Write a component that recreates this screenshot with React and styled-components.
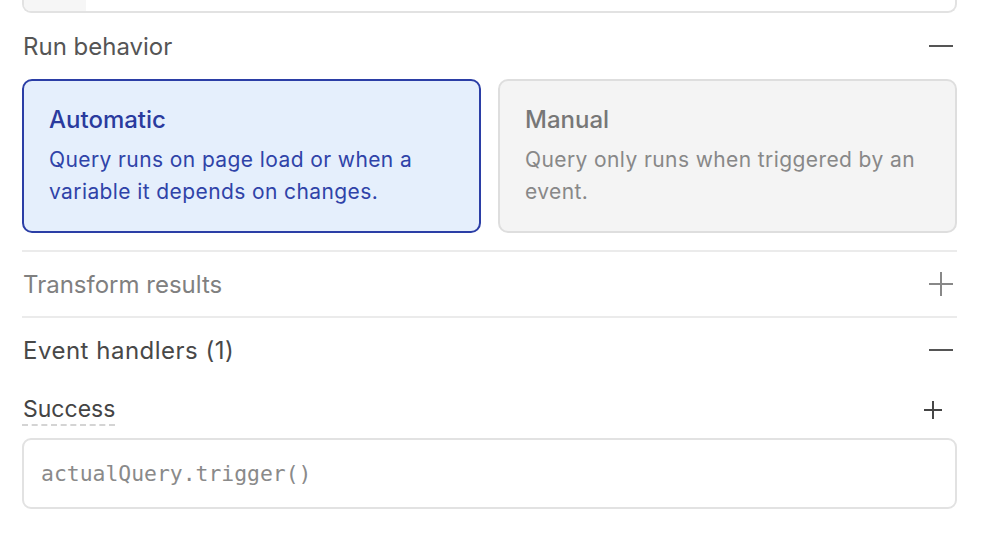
import React from 'react'
import styled, {createGlobalStyle} from 'styled-components'

const GlobalStyle = createGlobalStyle`
  body {
    margin: 0;
    background: #fff;
    font-family: Inter, "Noto Sans", sans-serif;
  }
`

const MinusIcon = ({color}) => (
  <svg width="24" height="24" viewBox="0 0 24 24">
    <path d="M0 12h24" stroke={color} strokeWidth="2" />
  </svg>
)

const PlusIcon = ({color, size = 24}) => (
  <svg width={size} height={size} viewBox="0 0 24 24">
    <path d="M0 12h24M12 0v24" stroke={color} strokeWidth={size < 20 ? 2.6 : 2} />
  </svg>
)

export default function App() {
  return (
    <Page>
      <GlobalStyle />
      <EditorStub>
        <Gutter />
      </EditorStub>

      <SectionHeader>
        <SectionTitle color="#555">Run behavior</SectionTitle>
        <MinusIcon color="#555" />
      </SectionHeader>

      <Cards>
        <OptionCard active>
          <CardTitle active>Automatic</CardTitle>
          <CardText active>
            Query runs on page load or when a variable it depends on changes.
          </CardText>
        </OptionCard>
        <OptionCard>
          <CardTitle>Manual</CardTitle>
          <CardText>Query only runs when triggered by an event.</CardText>
        </OptionCard>
      </Cards>

      <Divider top="17px" />

      <SectionHeader height="64px">
        <SectionTitle color="#808080">Transform results</SectionTitle>
        <PlusIcon color="#888" />
      </SectionHeader>

      <Divider />

      <SectionHeader height="64px">
        <SectionTitle color="#484848" spacing="0.5px">
          Event handlers (1)
        </SectionTitle>
        <MinusIcon color="#555" />
      </SectionHeader>

      <HandlerRow>
        <HandlerLabel>Success</HandlerLabel>
        <AddButton>
          <PlusIcon color="#444" size={18} />
        </AddButton>
      </HandlerRow>

      <CodeBox>actualQuery.trigger()</CodeBox>
    </Page>
  )
}

const Page = styled.div`
  padding: 0 31px 0 22px;
  display: flex;
  flex-direction: column;
`

const EditorStub = styled.div`
  height: 11px;
  border: 2px solid #e2e2e2;
  border-top: none;
  border-radius: 0 0 9px 9px;
  display: flex;
  overflow: hidden;
`

const Gutter = styled.div`
  width: 62px;
  background: #f6f6f6;
`

const SectionHeader = styled.div`
  height: ${props => props.height || '66px'};
  display: flex;
  align-items: center;
  justify-content: space-between;
  padding-left: 1px;
  padding-right: 4px;
`

const SectionTitle = styled.div`
  font-size: 24px;
  letter-spacing: ${props => props.spacing || 'normal'};
  color: ${props => props.color};
`

const Cards = styled.div`
  display: grid;
  grid-template-columns: 1fr 1fr;
  gap: 17px;
`

const OptionCard = styled.div`
  height: 154px;
  box-sizing: border-box;
  padding: 23px 25px;
  border-radius: 10px;
  border: 2px solid ${props => (props.active ? '#2b3ea6' : '#dedede')};
  background: ${props => (props.active ? '#e5effc' : '#f4f4f4')};
`

const CardTitle = styled.div`
  font-size: 24px;
  line-height: 32px;
  font-weight: 500;
  margin-bottom: 8px;
  color: ${props => (props.active ? '#2a3b9e' : '#777')};
`

const CardText = styled.div`
  font-size: 21px;
  line-height: 32px;
  letter-spacing: 0.4px;
  color: ${props => (props.active ? '#2f43a8' : '#888')};
`

const Divider = styled.div`
  height: 2px;
  flex-shrink: 0;
  background: #ebebeb;
  margin-top: ${props => props.top || '0'};
`

const HandlerRow = styled.div`
  height: 56px;
  display: flex;
  align-items: center;
  justify-content: space-between;
  padding-right: 15px;
`

const HandlerLabel = styled.div`
  font-size: 23px;
  color: #444;
  padding: 0 0 1px 1px;
  border-bottom: 2px dashed #d4d4d4;
`

const AddButton = styled.div`
  display: flex;
`

const CodeBox = styled.div`
  height: 71px;
  box-sizing: border-box;
  border: 2px solid #e2e2e2;
  border-radius: 9px;
  padding-left: 17px;
  display: flex;
  align-items: center;
  font-family: "DejaVu Sans Mono", monospace;
  font-size: 21.4px;
  color: #8a8a8a;
`
